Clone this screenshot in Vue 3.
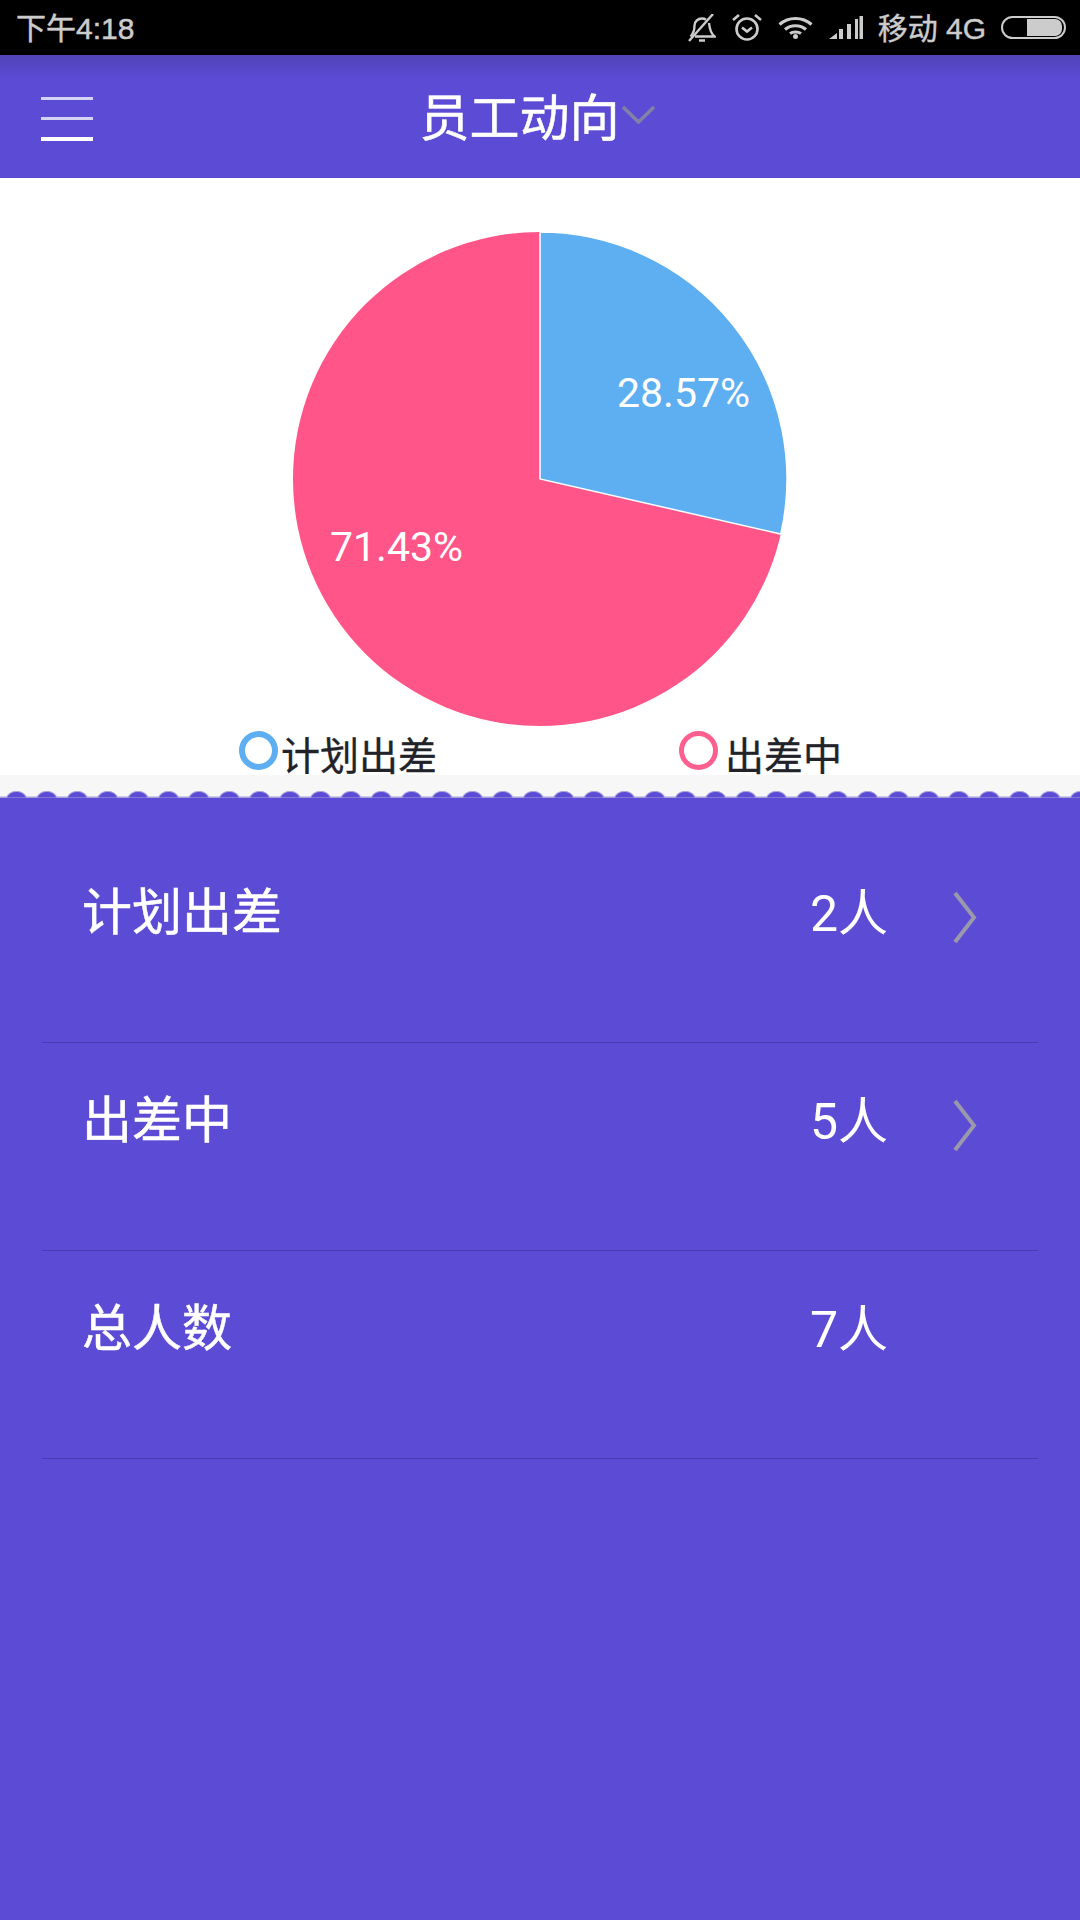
<script setup>
const rows = [
  { label: '计划出差', value: '2人', arrow: true },
  { label: '出差中', value: '5人', arrow: true },
  { label: '总人数', value: '7人', arrow: false },
]
</script>

<template>
  <div class="page">
    <div class="status">
      <span class="time">下午4:18</span>
      <div class="status-right">
        <svg class="ic bell" width="28" height="28" viewBox="0 0 28 28" fill="none" stroke="#ccc" stroke-width="2.400">
          <path d="M2.500 22.500c3-3 4-6 4-11 0-4 3.500-7 7.500-7 1.500 0 3 .4 4 1.200" />
          <path d="M21 9c.5 5 1.500 10 5.500 13.500H7" />
          <path d="M1 27 25 0" />
          <path d="M11 26.500h6" stroke-width="2.500" />
        </svg>
        <svg class="ic alarm" width="30" height="27" viewBox="0 0 30 27" fill="none" stroke="#ccc" stroke-width="2.600">
          <circle cx="15" cy="15" r="10.500" />
          <path d="M10 13.500l5 4 5-4" />
          <path d="M1 6l6-5M29 6l-6-5" />
        </svg>
        <svg class="ic wifi" width="35" height="23" viewBox="0 0 35 23" fill="none" stroke="#ccc" stroke-width="3.200">
          <path d="M1.500 8.500c9-8 23-8 32 0M7 13.500c6-5 15-5 21 0M12 17.500c3-2 8-2 11 0" />
          <circle cx="17.500" cy="20.500" r="2.500" fill="#ccc" stroke="none" />
        </svg>
        <svg class="ic signal" width="34" height="23" viewBox="0 0 34 23" fill="#ccc">
          <path d="M0 23 8 17v6zM10 13h4v10h-4zM18 8h4v15h-4zM26 3h3v20h-3zM30.500 0H34v23h-3.500z" />
        </svg>
        <span class="carrier">移动 4G</span>
        <div class="battery"><div class="battery-fill"></div></div>
      </div>
    </div>

    <header class="bar">
      <div class="menu"><i></i><i></i><i></i></div>
      <div class="title">
        <span>员工动向</span>
        <svg width="33" height="18" viewBox="0 0 33 18" fill="none" stroke="#8480a8" stroke-width="3.500">
          <path d="M1 1l15.500 15L32 1" />
        </svg>
      </div>
    </header>

    <section class="chart">
      <div class="pie-wrap">
        <svg width="496" height="496" viewBox="0 0 496 496">
          <circle cx="248" cy="248" r="247" fill="#ff5588" />
          <path d="M248 248V1A247 247 0 0 1 488.800 303Z" fill="#5eaef2" stroke="#fff" stroke-width="1.500" />
        </svg>
        <span class="pct pct-blue">28.57%</span>
        <span class="pct pct-pink">71.43%</span>
      </div>
      <div class="legend">
        <div class="lg lg-a"><i class="dot blue"></i><span>计划出差</span></div>
        <div class="lg lg-b"><i class="dot pink"></i><span>出差中</span></div>
      </div>
    </section>

    <section class="panel">
      <div class="strip">
        <svg class="scallop" width="1080" height="8" viewBox="0 0 1080 8">
          <defs>
            <pattern id="sc" x="1.300" y="0" width="30.400" height="8" patternUnits="userSpaceOnUse">
              <path d="M0 8V7H5.500C7 4 10 1.500 15.200 1.500S23.400 4 24.900 7H30.400V8Z" fill="#5b4bd5" stroke="#a8a2de" stroke-width="1" />
            </pattern>
          </defs>
          <rect width="1080" height="8" fill="url(#sc)" />
        </svg>
      </div>
      <div class="list">
        <div v-for="r in rows" :key="r.label" class="row">
          <span class="label">{{ r.label }}</span>
          <span class="value">{{ r.value }}</span>
          <svg v-if="r.arrow" class="chev" width="26" height="53" viewBox="0 0 26 53" fill="none" stroke="#9a98ac" stroke-width="4">
            <path d="M3 2l19 24.500L3 51" />
          </svg>
        </div>
      </div>
    </section>
  </div>
</template>

<style scoped>
.page { width: 1080px; height: 1920px; display: flex; flex-direction: column; overflow: hidden; font-family: "Noto Sans CJK SC", "Liberation Sans", sans-serif; }
.status { height: 55px; background: #000; display: flex; align-items: center; justify-content: space-between; padding: 0 14px 0 16px; box-sizing: border-box; color: #ccc; flex: none; }
.time { font-family: "Liberation Sans", "Noto Sans CJK SC", sans-serif; font-size: 30px; -webkit-text-stroke: 0.5px #ccc; margin-top: -3px; }
.status-right { display: flex; align-items: center; }
.ic { display: block; flex: none; }
.bell, .alarm { margin-right: 16px; }
.wifi { margin-right: 16px; }
.signal { margin-right: 15px; }
.carrier { font-family: "Liberation Sans", "Noto Sans CJK SC", sans-serif; font-size: 30px; margin: -3px 15px 0 0; -webkit-text-stroke: 0.4px #ccc; }
.battery { width: 65px; height: 23px; border: 2px solid #ccc; border-radius: 12px; box-sizing: border-box; display: flex; justify-content: flex-end; padding: 1px 2px; }
.battery-fill { width: 35px; background: #ccc; border-radius: 0 7px 7px 0; }
.bar { height: 123px; background: linear-gradient(#5143b8, #5b4bd5 24px); position: relative; display: flex; align-items: center; justify-content: center; flex: none; }
.menu { position: absolute; left: 41px; top: 42px; width: 52px; display: flex; flex-direction: column; gap: 17px; }
.menu i { display: block; height: 3px; background: #d6d2f5; }
.menu i:last-child { height: 4px; background: #fff; }
.title { color: #fff; font-size: 50px; -webkit-text-stroke: 0.5px #fff; display: flex; align-items: center; line-height: 1; margin: -5px 6px 0 0; }
.title svg { margin: 2px 0 0 2px; -webkit-text-stroke: 0; }
.chart { height: 597px; background: #fff; position: relative; flex: none; display: flex; flex-direction: column; align-items: center; }
.pie-wrap { width: 496px; height: 496px; margin-top: 53px; position: relative; }
.pct { position: absolute; color: #fff; font-family: Roboto, sans-serif; font-size: 41px; line-height: 1; }
.pct-blue { left: 325px; top: 142px; }
.pct-pink { left: 38px; top: 296px; }
.legend { position: absolute; left: 0; right: 0; top: 0; height: 597px; }
.lg { position: absolute; top: 553px; display: flex; align-items: center; font-size: 39px; line-height: 44px; color: #222229; -webkit-text-stroke: 0.3px #222229; }
.lg-a { left: 239px; }
.lg-b { left: 679px; }
.dot { display: block; width: 39px; height: 39px; border-radius: 50%; border: 5px solid; box-sizing: border-box; margin-top: -6px; margin-right: 3px; }
.dot.blue { border-color: #5eaef2; border-width: 6px; }
.dot.pink { border-color: #ff5f8f; margin-right: 7px; }
.panel { flex: 1; background: #5b4bd5; display: flex; flex-direction: column; }
.strip { height: 23px; background: #f7f7f7; position: relative; flex: none; }
.scallop { position: absolute; left: 0; bottom: 0; display: block; }
.list { padding: 37px 42px 0; }
.row { height: 208px; box-sizing: border-box; border-bottom: 1px solid #4a3cb4; display: flex; padding: 43px 0 0 40px; position: relative; color: #fff; }
.label { font-size: 50px; -webkit-text-stroke: 0.5px #fff; line-height: 60px; }
.value { position: absolute; right: 150px; top: 49px; font-size: 50px; line-height: 60px; font-family: Roboto, "Noto Sans CJK SC", sans-serif; }
.chev { position: absolute; right: 60px; top: 56px; }
</style>
